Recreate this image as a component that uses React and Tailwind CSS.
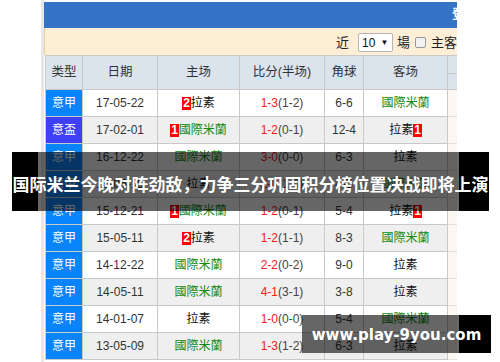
import React from "react";

const GREEN = "國際米蘭";

const rows = [
  { t: "意甲", d: "17-05-22", h: "拉素", hb: "2", s: ["1-3", "(1-2)"], c: "6-6", a: GREEN },
  { t: "意盃", d: "17-02-01", h: GREEN, hb: "1", s: ["1-2", "(0-1)"], c: "12-4", a: "拉素", ab: "1" },
  { t: "意甲", d: "16-12-22", h: GREEN, s: ["3-0", "(0-0)"], c: "6-3", a: "拉素" },
  { t: "意甲", d: "16-05-15", h: "拉素", s: ["2-0", "(1-0)"], c: "4-5", a: GREEN },
  { t: "意甲", d: "15-12-21", h: GREEN, hb: "1", s: ["1-2", "(0-1)"], c: "5-4", a: "拉素", ab: "1" },
  { t: "意甲", d: "15-05-11", h: "拉素", hb: "2", s: ["1-2", "(1-1)"], c: "8-3", a: GREEN },
  { t: "意甲", d: "14-12-22", h: GREEN, s: ["2-2", "(0-2)"], c: "9-0", a: "拉素" },
  { t: "意甲", d: "14-05-11", h: GREEN, s: ["4-1", "(3-1)"], c: "3-8", a: "拉素" },
  { t: "意甲", d: "14-01-07", h: "拉素", s: ["1-0", "(0-0)"], c: "5-4", a: GREEN },
  { t: "意甲", d: "13-05-09", h: GREEN, s: ["1-3", "(1-2)"], c: "6-3", a: "拉素" },
];

const font = { fontFamily: '"Liberation Sans", "Noto Sans CJK SC", sans-serif' };

function Badge({ n }) {
  return (
    <span className="inline-block bg-[#ff0000] text-white font-bold text-[12px] leading-[13px] px-[1px]">
      {n}
    </span>
  );
}

function Team({ name, badge, after }) {
  const color = name === GREEN ? "text-[#138a13]" : "text-[#111]";
  return (
    <span className="inline-flex items-center">
      {badge && !after && <Badge n={badge} />}
      <span className={color}>{name}</span>
      {badge && after && <Badge n={badge} />}
    </span>
  );
}

const cell = "flex items-center justify-center border-r border-b border-[#c9c9c9] flex-none";

export default function App() {
  return (
    <div className="relative w-[500px] h-[362px] overflow-hidden bg-white" style={font}>
      <div className="flex h-full ml-[41px] w-[416px]">
        <div className="w-[3px] flex-none bg-[#e8e8e8]" />
        <div className="w-[413px] flex-none flex flex-col pt-[2px] overflow-hidden">
          <div className="h-[26px] flex-none bg-[#3573c7] flex items-start pl-[408px] pt-[5px] overflow-hidden">
            <span className="text-white font-bold text-[13px] leading-[14px] whitespace-nowrap">登录</span>
          </div>
          <div className="h-[27px] flex-none bg-[#fcefd5] border-l border-[#e8d2a4] flex items-center pl-[291px] pt-[2px] overflow-hidden whitespace-nowrap text-[13px] text-[#222]">
            <span className="flex-none">近</span>
            <span className="flex-none ml-[9px] w-[35px] h-[19px] border border-[#b5b5b5] bg-white rounded-[2px] flex items-center pl-[3px] text-[12px] text-[#111]">
              10
              <span className="ml-[5px] text-[8px]">▼</span>
            </span>
            <span className="flex-none ml-[4px]">場</span>
            <span className="flex-none ml-[5px] w-[11px] h-[11px] border border-[#999] rounded-[2px] bg-[#f2f2f2]" />
            <span className="flex-none ml-[5px]">主客</span>
          </div>
          <div className="ml-[1px] w-[413px] flex-none border-l border-t border-[#c9c9c9] text-[12px]">
            <div className="flex h-[34px] bg-[#dbe3ed] text-[#333] text-[12.5px]">
              <div className={`${cell} w-[37px]`}>类型</div>
              <div className={`${cell} w-[75px]`}>日期</div>
              <div className={`${cell} w-[82px]`}>主场</div>
              <div className={`${cell} w-[85px]`}>比分(半场)</div>
              <div className={`${cell} w-[39px]`}>角球</div>
              <div className={`${cell} w-[84px]`}>客场</div>
              <div className="w-[10px] flex-none flex flex-col border-b border-[#c9c9c9]">
                <div className="h-[18px] border-b border-[#c9c9c9]" />
              </div>
            </div>
            {rows.map((r, i) => (
              <div key={i} className={`flex h-[27px] ${i % 2 === 1 ? "bg-[#efefef]" : "bg-white"}`}>
                <div
                  className={`${cell} w-[37px] text-white ${r.t === "意盃" ? "bg-[#3f3ff8]" : "bg-[#0a84fb]"}`}
                >
                  {r.t}
                </div>
                <div className={`${cell} w-[75px] text-[#333]`}>{r.d}</div>
                <div className={`${cell} w-[82px]`}>
                  <Team name={r.h} badge={r.hb} />
                </div>
                <div className={`${cell} w-[85px]`}>
                  <span className="text-[#f02020]">{r.s[0]}</span>
                  <span className="text-[#444]">{r.s[1]}</span>
                </div>
                <div className={`${cell} w-[39px] text-[#333]`}>{r.c}</div>
                <div className={`${cell} w-[84px]`}>
                  <Team name={r.a} badge={r.ab} after />
                </div>
                <div className="w-[10px] flex-none bg-[#fdf7f2] border-b border-[#e2e2e2]" />
              </div>
            ))}
          </div>
        </div>
      </div>

      <div className="absolute left-[12px] top-[152px] w-[477px] h-[59px] flex">
        <div className="w-[26px] h-full bg-black" />
        <div className="w-[421px] h-full bg-black/60" />
        <div className="w-[30px] h-full bg-black" />
        <div
          className="absolute inset-0 flex items-center justify-center pt-[4px] text-white font-bold text-[17px] whitespace-nowrap"
          style={{ fontFamily: '"Noto Sans CJK SC", sans-serif' }}
        >
          国际米兰今晚对阵劲敌，力争三分巩固积分榜位置决战即将上演
        </div>
      </div>

      <div className="absolute left-[302px] top-[315px] w-[189px] h-[38px] flex">
        <div className="w-[157px] h-full bg-black/60" />
        <div className="w-[32px] h-full bg-black" />
        <div
          className="absolute inset-0 flex items-center justify-center pt-[2px] text-white font-bold text-[15px] whitespace-nowrap"
          style={{ fontFamily: '"DejaVu Sans", sans-serif' }}
        >
          www.play-9you.com
        </div>
      </div>
    </div>
  );
}
